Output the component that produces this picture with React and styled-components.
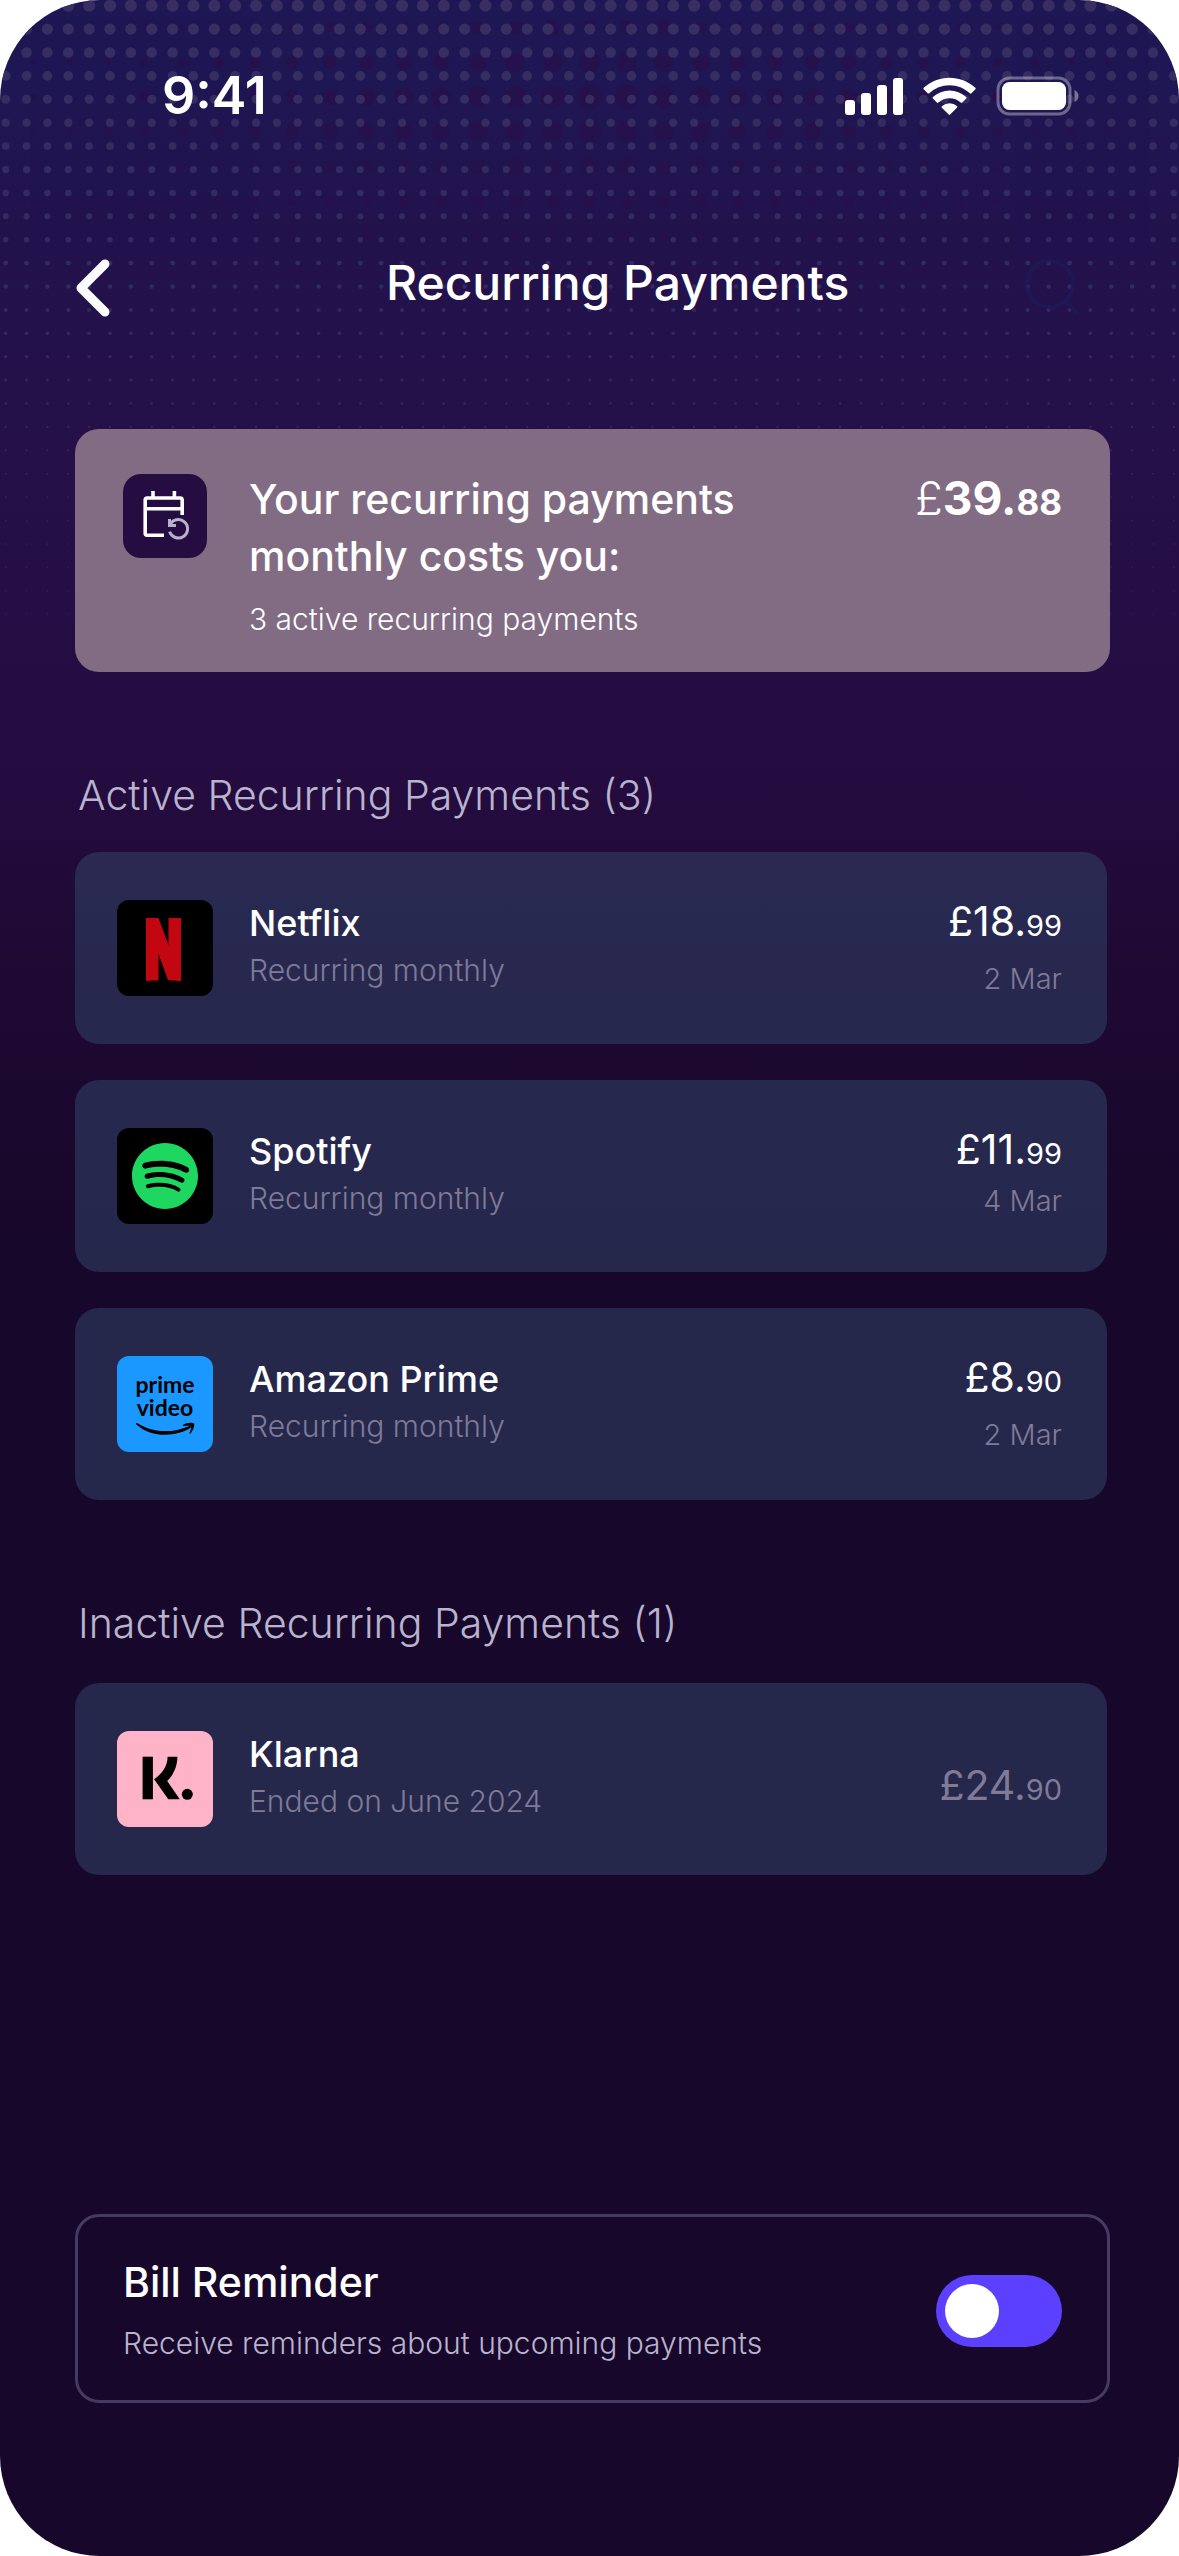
import React, { useState } from 'react';
import styled, { createGlobalStyle } from 'styled-components';
import { SiSpotify } from 'react-icons/si';

const Color = {
	text: '#ffffff',
	soft: '#b9b3cd',
	muted: '#7f7a98',
	card: 'rgba(46, 62, 99, 0.6)',
	summary: '#826c84',
	tile: '#250d42',
	outline: '#453b60',
	toggle: '#5b40ff',
};

const active = [
	{ id: 'netflix', name: 'Netflix', note: 'Recurring monthly', pounds: '£18.', pence: '99', date: '2 Mar', gap: 22 },
	{ id: 'spotify', name: 'Spotify', note: 'Recurring monthly', pounds: '£11.', pence: '99', date: '4 Mar', gap: 16 },
	{ id: 'prime', name: 'Amazon Prime', note: 'Recurring monthly', pounds: '£8.', pence: '90', date: '2 Mar', gap: 22 },
];

const inactive = [
	{ id: 'klarna', name: 'Klarna', note: 'Ended on June 2024', pounds: '£24.', pence: '90' },
];

export default function App (){
	const [reminder, setReminder] = useState(false);
	return(
		<>
			<GlobalStyle/>
			<Screen>
				<Halftone/>
				<StatusBar>
					<Time>9:41</Time>
					<StatusIcons/>
				</StatusBar>
				<Header>
					<IconButton aria-label="Back"><BackIcon/></IconButton>
					<Title>Recurring Payments</Title>
					<IconButton aria-label="Search"><SearchIcon/></IconButton>
				</Header>
				<Main>
					<Summary>
						<SummaryTile><CalendarIcon/></SummaryTile>
						<SummaryText>
							<SummaryTitle>Your recurring payments<br/>monthly costs you:</SummaryTitle>
							<SummaryNote>3 active recurring payments</SummaryNote>
						</SummaryText>
						<Total><Currency>£</Currency>39.<TotalPence>88</TotalPence></Total>
					</Summary>

					<SectionTitle $gap={33}>Active Recurring Payments (3)</SectionTitle>
					<List>
						{active.map(item => <Payment key={item.id} item={item}/>)}
					</List>

					<SectionTitle $gap={36}>Inactive Recurring Payments (1)</SectionTitle>
					<List>
						{inactive.map(item => <Payment key={item.id} item={item}/>)}
					</List>

					<Reminder htmlFor="reminder">
						<ReminderText>
							<ReminderTitle>Bill Reminder</ReminderTitle>
							<ReminderNote>Receive reminders about upcoming payments</ReminderNote>
						</ReminderText>
						<Toggle
							id="reminder"
							type="checkbox"
							role="switch"
							checked={reminder}
							onChange={e => setReminder(e.target.checked)}
						/>
					</Reminder>
				</Main>
			</Screen>
		</>
	);
}

function Payment ({ item }){
	return(
		<Card>
			<Logo id={item.id}/>
			<CardText>
				<Name>{item.name}</Name>
				<Note>{item.note}</Note>
			</CardText>
			<Cost $gap={item.gap} $ended={!item.date}>
				<Amount $ended={!item.date}>{item.pounds}<Pence>{item.pence}</Pence></Amount>
				{item.date && <Day>{item.date}</Day>}
			</Cost>
		</Card>
	);
}

function Logo ({ id }){
	if (id === 'spotify') {
		return <LogoTile $color="#000"><SiSpotify size={66} color="#1ed760"/></LogoTile>;
	}
	if (id === 'netflix') {
		return(
			<LogoTile $color="#000">
				<svg width="96" height="96" viewBox="0 0 96 96">
					<path fill="#c20710" d="M29 18H41.5L51.5 45V18H64V81.2Q58 80.3 51 80L41.5 54V80.2Q35 80.4 29 81Z"/>
				</svg>
			</LogoTile>
		);
	}
	if (id === 'prime') {
		return(
			<LogoTile $color="#1a98ff">
				<svg width="96" height="96" viewBox="0 0 96 96">
					<LogoWord x="48" y="37">prime</LogoWord>
					<LogoWord x="48" y="60">video</LogoWord>
					<path d="M19 67.2Q20 66.6 21 67.4C35 76.5 55 77.5 71 70.4Q73.5 69.4 74 70.4Q74.4 71.3 72.5 72.6C57 81.5 34 81.5 19.4 68.4Q18.6 67.6 19 67.2Z"/>
					<path d="M66 69C69 66.5 76 66.2 77 67.6C78 69 76 75.3 73.4 77.5C72.8 78 72.2 77.7 72.5 77C73.4 75 74.6 71.3 74 70.4C73.4 69.5 69.3 69.8 66.8 70.1C65.9 70.2 65.5 69.5 66 69Z"/>
				</svg>
			</LogoTile>
		);
	}
	return(
		<LogoTile $color="#ffb3c7">
			<svg width="96" height="96" viewBox="0 0 96 96">
				<rect x="25.6" y="25.7" width="10.3" height="42.6"/>
				<path d="M50.6 25.7H60.4C60.4 35 56.5 44 50.2 50L62.8 68.3H51.3L37.1 48.3C45.5 42.5 50.6 34.5 50.6 25.7Z"/>
				<circle cx="70.3" cy="63.3" r="5.5"/>
			</svg>
		</LogoTile>
	);
}

// two halftone layers: light dots shrinking downwards, dark dots swelling in the middle
function Halftone (){
	const light = [];
	for (let row = 0; row < 27; row++) {
		for (let col = 0; col < 57; col++) {
			const r = 0.7 + 5.3 * Math.pow(1 - row / 26, 2);
			light.push(<circle key={row + '-' + col} cx={5.7 + col * 20.86} cy={5.7 + row * 23.4} r={r}/>);
		}
	}
	const sizes = [7, 10.5, 12.5, 11, 9, 7, 5, 3.5, 2];
	const dark = [];
	sizes.forEach((size, row) => {
		for (let col = 0; col < 31; col++) {
			const cx = 33 + col * 37.1;
			const r = size * (1 - Math.abs(cx - 589) / 720);
			dark.push(<circle key={row + '-' + col} cx={cx} cy={27.5 + row * 34.8} r={r}/>);
		}
	});
	return(
		<Dots viewBox="0 0 1179 640" preserveAspectRatio="xMidYMin slice" aria-hidden="true">
			<defs>
				<linearGradient id="lightDots" gradientUnits="userSpaceOnUse" x1="0" y1="0" x2="0" y2="640">
					<stop offset="0" stopColor="#382e62"/>
					<stop offset="0.5" stopColor="#2e2a5f"/>
					<stop offset="1" stopColor="#2b2155"/>
				</linearGradient>
			</defs>
			<g fill="#27104a" opacity="0.75">{dark}</g>
			<g fill="url(#lightDots)">{light}</g>
		</Dots>
	);
}

function StatusIcons (){
	return(
		<svg width="234" height="40" viewBox="0 0 234 40" fill="#fff" aria-hidden="true">
			<rect x="0" y="24" width="10" height="15" rx="3"/>
			<rect x="16" y="17" width="10" height="22" rx="3"/>
			<rect x="32" y="9" width="10" height="30" rx="3"/>
			<rect x="48" y="2" width="10" height="37" rx="3"/>
			<path transform="translate(78.5 1.7) scale(3.04)" d="M8.57 2.466c2.487 0 4.88.953 6.682 2.66a.364.364 0 0 0 .51-.004l1.298-1.308a.348.348 0 0 0-.003-.495C12.316-1.107 4.825-1.107.083 3.319a.348.348 0 0 0-.003.495l1.297 1.308c.14.14.367.142.51.005A9.72 9.72 0 0 1 8.57 2.467Zm.003 4.289c1.36 0 2.671.503 3.678 1.41a.36.36 0 0 0 .506-.003l1.289-1.305a.356.356 0 0 0-.005-.51c-3.08-2.886-7.853-2.886-10.932 0a.356.356 0 0 0-.004.51l1.289 1.305a.36.36 0 0 0 .506.003 5.5 5.5 0 0 1 3.673-1.41Zm2.52 2.868a.36.36 0 0 1-.105.263l-2.226 2.248a.348.348 0 0 1-.496 0L6.04 9.886a.36.36 0 0 1 .01-.52 3.873 3.873 0 0 1 5.039 0 .36.36 0 0 1 .01.257Z"/>
			<rect x="153" y="2" width="72" height="36" rx="11.5" fill="none" stroke="#fff" strokeOpacity="0.35" strokeWidth="3"/>
			<rect x="157" y="6" width="64" height="28" rx="7.5"/>
			<path d="M229.500 14V26C232 25 233.500 22.600 233.500 20S232 15 229.500 14Z" fillOpacity="0.4"/>
		</svg>
	);
}

function BackIcon (){
	return(
		<svg width="36" height="58" viewBox="0 0 36 58" fill="none" stroke="#fff" strokeWidth="9" strokeLinecap="round" strokeLinejoin="round">
			<path d="M30 5L6 29L30 53"/>
		</svg>
	);
}

function SearchIcon (){
	return(
		<svg width="58" height="58" viewBox="0 0 58 58" fill="none" stroke="#1c1c59" strokeOpacity="0.6" strokeWidth="4" strokeLinecap="round">
			<circle cx="27" cy="25" r="23"/>
			<path d="M43 43L54 54"/>
		</svg>
	);
}

function CalendarIcon (){
	return(
		<svg width="84" height="84" viewBox="0 0 84 84" fill="none" stroke="#fff" strokeWidth="3.6">
			<path d="M41 61.200H24.200Q22.200 61.200 22.200 59.200V26Q22.200 24 24.200 24H57.200Q59.200 24 59.200 26V41"/>
			<path d="M22.200 34.800H59.200M30 17V24M51.400 17V24"/>
			<g stroke="#b9b0cc" strokeWidth="3">
				<path d="M47 51A9.200 9.200 0 1 1 46.600 57.600"/>
				<path d="M46.500 45V51.500H53"/>
			</g>
		</svg>
	);
}

const GlobalStyle = createGlobalStyle`
	body {
		margin: 0;
		background: white;
		font-family: Inter, 'Liberation Sans', sans-serif;
		color: ${Color.text};
	}
	*, *::before {
		box-sizing: border-box;
	}
	h1, h2, p, ul {
		margin: 0;
		padding: 0;
	}
`

const Screen = styled.div`
	position: relative;
	z-index: 0;
	display: flex;
	flex-direction: column;
	min-height: 100vh;
	border-radius: 100px;
	overflow: hidden;
	background: linear-gradient(#1f1753 0, #1f1753 90px, #22124c 240px, #251049 450px, #240c40 780px, #1e0932 980px, #17072a 1260px);
`

const Dots = styled.svg`
	position: absolute;
	top: 0;
	left: 0;
	width: 100%;
	z-index: -1;
`

const StatusBar = styled.div`
	display: flex;
	align-items: center;
	justify-content: space-between;
	height: 40px;
	margin: 76px 100px 0 162px;
`

const Time = styled.span`
	font-size: 52px;
	line-height: 40px;
	font-weight: 600;
`

const Header = styled.header`
	display: grid;
	grid-template-columns: 311px 1fr auto;
	align-items: start;
	margin: 143px 98px 0 75px;
`

const IconButton = styled.button`
	display: flex;
	justify-self: start;
	padding: 0;
	border: none;
	background: none;
	cursor: pointer;
`

const Title = styled.h1`
	font-size: 48px;
	line-height: 48px;
	font-weight: 500;
`

const Main = styled.main`
	display: flex;
	flex-direction: column;
	flex: 1;
	padding: 112px 69px 153px 75px;
`

const Summary = styled.section`
	display: flex;
	align-items: flex-start;
	padding: 42px 48px 32px;
	border-radius: 24px;
	background: ${Color.summary};
`

const SummaryTile = styled.div`
	display: flex;
	flex: none;
	margin-top: 3px;
	margin-right: 42px;
	border-radius: 18px;
	background: ${Color.tile};
`

const SummaryText = styled.div`
	flex: 1;
`

const SummaryTitle = styled.h2`
	font-size: 41px;
	line-height: 57px;
	font-weight: 500;
`

const SummaryNote = styled.p`
	margin-top: 13px;
	font-size: 30px;
	line-height: 42px;
	font-weight: 300;
`

const Total = styled.p`
	margin-top: 3px;
	font-size: 46px;
	line-height: 48px;
	font-weight: 700;
`

const Currency = styled.span`
	font-weight: 300;
`

const TotalPence = styled.span`
	font-size: 35px;
	line-height: 1;
`

const SectionTitle = styled.h2`
	margin-top: 99px;
	margin-bottom: ${props => props.$gap}px;
	padding-left: 3px;
	font-size: 41px;
	line-height: 48px;
	font-weight: 300;
	color: ${Color.soft};
`

const List = styled.ul`
	display: flex;
	flex-direction: column;
	gap: 36px;
	margin-right: 3px;
	list-style: none;
`

const Card = styled.li`
	display: flex;
	align-items: flex-start;
	padding: 48px 45px 48px 42px;
	border-radius: 24px;
	background: ${Color.card};
`

const LogoTile = styled.div`
	display: flex;
	flex: none;
	align-items: center;
	justify-content: center;
	width: 96px;
	height: 96px;
	margin-right: 36px;
	border-radius: 12px;
	background: ${props => props.$color};
`

const LogoWord = styled.text`
	font-family: Lato, sans-serif;
	font-size: 23px;
	font-weight: 700;
	text-anchor: middle;
`

const CardText = styled.div`
	flex: 1;
`

const Name = styled.p`
	font-size: 36px;
	line-height: 46px;
	font-weight: 500;
`

const Note = styled.p`
	margin-top: 3px;
	font-size: 30px;
	line-height: 42px;
	font-weight: 300;
	color: ${Color.muted};
`

const Cost = styled.div`
	display: flex;
	flex-direction: column;
	align-items: flex-end;
	gap: ${props => props.$gap}px;
	padding-top: ${props => props.$ended ? 33 : 0}px;
`

const Amount = styled.p`
	font-size: 41px;
	line-height: 42px;
	font-weight: 400;
	color: ${props => props.$ended ? Color.muted : Color.text};
`

const Pence = styled.span`
	font-size: 29px;
	line-height: 1;
`

const Day = styled.p`
	font-size: 29px;
	line-height: 30px;
	font-weight: 300;
	color: ${Color.muted};
`

const Reminder = styled.label`
	display: flex;
	align-items: center;
	justify-content: space-between;
	margin-top: auto;
	padding: 41px 45px 36px;
	border: solid 3px ${Color.outline};
	border-radius: 24px;
	cursor: pointer;
`

const ReminderText = styled.div`
	display: flex;
	flex-direction: column;
	gap: 16px;
`

const ReminderTitle = styled.span`
	font-size: 41px;
	line-height: 48px;
	font-weight: 500;
`

const ReminderNote = styled.span`
	font-size: 30px;
	line-height: 42px;
	font-weight: 300;
	color: ${Color.soft};
`

const Toggle = styled.input`
	appearance: none;
	flex: none;
	width: 126px;
	height: 72px;
	margin: 0;
	padding: 9px;
	border-radius: 36px;
	background: ${Color.toggle};
	cursor: pointer;
	&::before{
		content: '';
		display: block;
		width: 54px;
		height: 54px;
		border-radius: 50%;
		background: white;
		transition: 0.1s;
	}
	&:checked::before{
		margin-left: 54px;
	}
`
